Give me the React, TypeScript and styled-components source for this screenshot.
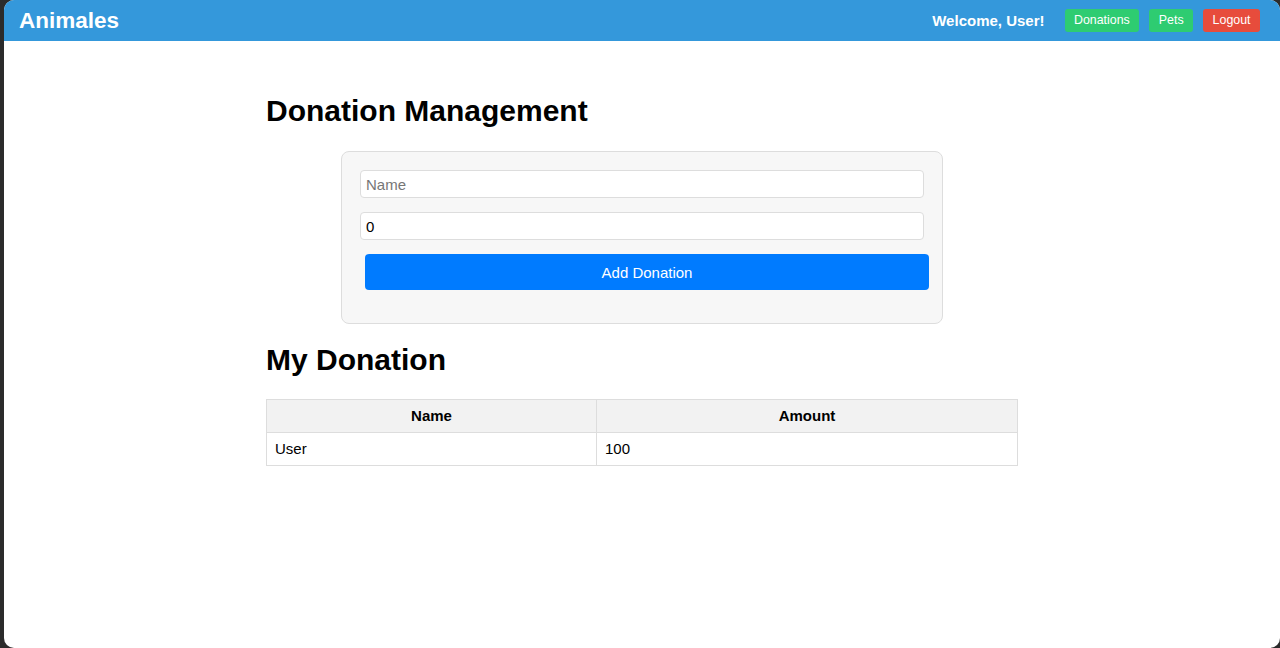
import React from "react";
import styled, { createGlobalStyle } from "styled-components";

const Global = createGlobalStyle`
  html, body {
    margin: 0;
    padding: 0;
    background: #2b2b2b;
    font-family: "Liberation Sans", Arial, sans-serif;
  }
  * { box-sizing: border-box; }
`;

const Frame = styled.div`
  margin-left: 4px;
  height: 648px;
  background: #ffffff;
  border-radius: 10px;
  overflow: hidden;
`;

const Header = styled.header`
  height: 41px;
  background: #3498db;
  display: flex;
  align-items: center;
  justify-content: space-between;
  padding: 0 20px 0 15px;
  color: #ffffff;
`;

const Brand = styled.div`
  font-size: 22.5px;
  font-weight: bold;
`;

const Nav = styled.nav`
  display: flex;
  align-items: center;
  gap: 10px;
`;

const Welcome = styled.span`
  font-size: 15px;
  font-weight: bold;
  margin-right: 10px;
`;

const NavButton = styled.button<{ $bg: string }>`
  height: 23px;
  padding: 0 9.5px;
  border: none;
  border-radius: 3px;
  background: ${(p) => p.$bg};
  color: #ffffff;
  font-family: "Liberation Sans", Arial, sans-serif;
  font-size: 12.4px;
  line-height: 23px;
  cursor: pointer;
`;

const Main = styled.main`
  max-width: 752px;
  margin: 0 auto;
`;

const Title = styled.h1<{ $top: number; $bottom: number }>`
  margin: ${(p) => p.$top}px 0 ${(p) => p.$bottom}px;
  font-size: 30px;
  line-height: 34px;
  font-weight: bold;
  color: #000;
`;

const Card = styled.div`
  width: 602px;
  margin: 0 auto;
  padding: 18px 18px 33px;
  background: #f7f7f7;
  border: 1px solid #dddddd;
  border-radius: 8px;
  display: flex;
  flex-direction: column;
`;

const Input = styled.input<{ $h: number }>`
  width: 564px;
  height: ${(p) => p.$h}px;
  padding: 0 5px;
  border: 1px solid #dddddd;
  border-radius: 4px;
  background: #ffffff;
  font-family: "Liberation Sans", Arial, sans-serif;
  font-size: 15px;
  color: #000;
  & + & { margin-top: 14px; }
  &::placeholder { color: #767676; }
`;

const SubmitButton = styled.button`
  width: 564px;
  height: 36px;
  margin: 14px 0 0 5px;
  border: none;
  border-radius: 4px;
  background: #007bff;
  color: #ffffff;
  font-family: "Liberation Sans", Arial, sans-serif;
  font-size: 15px;
`;

const Table = styled.table`
  width: 100%;
  border-collapse: collapse;
  border: 1px solid #dddddd;
  font-size: 15px;
  color: #000;
`;

const Th = styled.th<{ $w?: number }>`
  ${(p) => (p.$w ? `width: ${p.$w}px;` : "")}
  background: #f2f2f2;
  border: 1px solid #dddddd;
  padding: 7px 8px;
  line-height: 18px;
  font-weight: bold;
  text-align: center;
`;

const Td = styled.td`
  border: 1px solid #dddddd;
  padding: 7px 8px;
  line-height: 18px;
  text-align: left;
`;

export default function App() {
  return (
    <>
      <Global />
      <Frame>
        <Header>
          <Brand>Animales</Brand>
          <Nav>
            <Welcome>Welcome, User!</Welcome>
            <NavButton $bg="#2ecc71">Donations</NavButton>
            <NavButton $bg="#2ecc71">Pets</NavButton>
            <NavButton $bg="#e74c3c">Logout</NavButton>
          </Nav>
        </Header>
        <Main>
          <Title $top={53} $bottom={23}>Donation Management</Title>
          <Card>
            <Input $h={28} placeholder="Name" />
            <Input $h={28} defaultValue="0" type="number" />
            <SubmitButton>Add Donation</SubmitButton>
          </Card>
          <Title $top={19} $bottom={22}>My Donation</Title>
          <Table>
            <thead>
              <tr>
                <Th $w={330}>Name</Th>
                <Th>Amount</Th>
              </tr>
            </thead>
            <tbody>
              <tr>
                <Td>User</Td>
                <Td>100</Td>
              </tr>
            </tbody>
          </Table>
        </Main>
      </Frame>
    </>
  );
}
